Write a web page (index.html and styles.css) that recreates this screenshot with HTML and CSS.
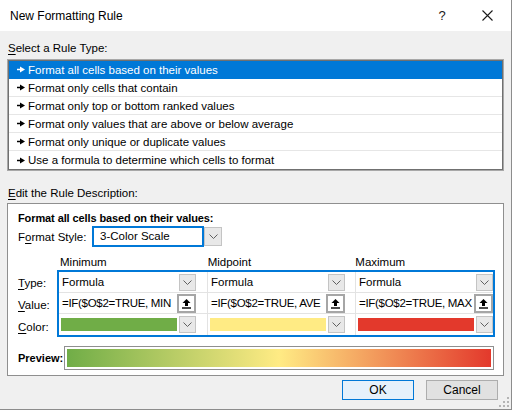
FILE: index.html
```html
<!DOCTYPE html>
<html>
<head>
<meta charset="utf-8">
<title>New Formatting Rule</title>
<link rel="stylesheet" href="styles.css">
</head>
<body>
<div class="dialog">
  <div class="titlebar">
    <span class="title">New Formatting Rule</span>
    <span class="help">?</span>
    <span class="close"><svg width="11" height="11" viewBox="0 0 11 11"><path d="M0.5 0.5L10.5 10.5M10.5 0.5L0.5 10.5" stroke="#1a1a1a" stroke-width="1.1" fill="none"/></svg></span>
  </div>
  <div class="content">
    <div class="section-label"><u>S</u>elect a Rule Type:</div>
    <ul class="rule-list">
      <li class="rule selected"><svg class="arrow" width="8" height="7" viewBox="0 0 8 7"><path d="M0 3.5H4" stroke="currentColor" stroke-width="1.5"/><path d="M3 0.5L8 3.5L3 6.5Z" fill="currentColor"/></svg>Format all cells based on their values</li>
      <li class="rule"><svg class="arrow" width="8" height="7" viewBox="0 0 8 7"><path d="M0 3.5H4" stroke="currentColor" stroke-width="1.5"/><path d="M3 0.5L8 3.5L3 6.5Z" fill="currentColor"/></svg>Format only cells that contain</li>
      <li class="rule"><svg class="arrow" width="8" height="7" viewBox="0 0 8 7"><path d="M0 3.5H4" stroke="currentColor" stroke-width="1.5"/><path d="M3 0.5L8 3.5L3 6.5Z" fill="currentColor"/></svg>Format only top or bottom ranked values</li>
      <li class="rule"><svg class="arrow" width="8" height="7" viewBox="0 0 8 7"><path d="M0 3.5H4" stroke="currentColor" stroke-width="1.5"/><path d="M3 0.5L8 3.5L3 6.5Z" fill="currentColor"/></svg>Format only values that are above or below average</li>
      <li class="rule"><svg class="arrow" width="8" height="7" viewBox="0 0 8 7"><path d="M0 3.5H4" stroke="currentColor" stroke-width="1.5"/><path d="M3 0.5L8 3.5L3 6.5Z" fill="currentColor"/></svg>Format only unique or duplicate values</li>
      <li class="rule last"><svg class="arrow" width="8" height="7" viewBox="0 0 8 7"><path d="M0 3.5H4" stroke="currentColor" stroke-width="1.5"/><path d="M3 0.5L8 3.5L3 6.5Z" fill="currentColor"/></svg>Use a formula to determine which cells to format</li>
    </ul>
    <div class="section-label edit-label"><u>E</u>dit the Rule Description:</div>
    <div class="desc-box">
      <div class="desc-title">Format all cells based on their values:</div>
      <div class="style-row">
        <span class="style-label">F<u>o</u>rmat Style:</span>
        <div class="combo">
          <div class="combo-text">3-Color Scale</div>
          <div class="dd-btn big"><svg width="9" height="5" viewBox="0 0 9 5"><path d="M0.5 0.5L4.5 4.5L8.5 0.5" stroke="#606060" fill="none"/></svg></div>
        </div>
      </div>
      <div class="scale-head">
        <span class="col-head">Minimum</span>
        <span class="col-head">Midpoint</span>
        <span class="col-head">Maximum</span>
      </div>
      <div class="scale-body">
        <div class="row-labels">
          <div class="row-label"><u>T</u>ype:</div>
          <div class="row-label"><u>V</u>alue:</div>
          <div class="row-label"><u>C</u>olor:</div>
        </div>
        <div class="scale-grid">
          <div class="cell"><div class="widget"><span class="cell-text">Formula</span><div class="dd-btn"><svg width="9" height="5" viewBox="0 0 9 5"><path d="M0.5 0.5L4.5 4.5L8.5 0.5" stroke="#606060" fill="none"/></svg></div></div></div>
          <div class="cell"><div class="widget"><span class="cell-text">Formula</span><div class="dd-btn"><svg width="9" height="5" viewBox="0 0 9 5"><path d="M0.5 0.5L4.5 4.5L8.5 0.5" stroke="#606060" fill="none"/></svg></div></div></div>
          <div class="cell"><div class="widget"><span class="cell-text">Formula</span><div class="dd-btn"><svg width="9" height="5" viewBox="0 0 9 5"><path d="M0.5 0.5L4.5 4.5L8.5 0.5" stroke="#606060" fill="none"/></svg></div></div></div>

          <div class="cell"><div class="widget"><span class="cell-text value-text">=IF($O$2=TRUE, MIN</span><div class="ref-btn"><svg width="11" height="11" viewBox="0 0 11 11"><path d="M5.5 1L1.5 5H4V8H7V5H9.5Z" fill="#000"/><path d="M1 10H10" stroke="#000" stroke-width="1.4"/></svg></div></div></div>
          <div class="cell"><div class="widget"><span class="cell-text value-text">=IF($O$2=TRUE, AVE</span><div class="ref-btn"><svg width="11" height="11" viewBox="0 0 11 11"><path d="M5.5 1L1.5 5H4V8H7V5H9.5Z" fill="#000"/><path d="M1 10H10" stroke="#000" stroke-width="1.4"/></svg></div></div></div>
          <div class="cell"><div class="widget"><span class="cell-text value-text">=IF($O$2=TRUE, MAX</span><div class="ref-btn"><svg width="11" height="11" viewBox="0 0 11 11"><path d="M5.5 1L1.5 5H4V8H7V5H9.5Z" fill="#000"/><path d="M1 10H10" stroke="#000" stroke-width="1.4"/></svg></div></div></div>

          <div class="cell last-row"><div class="widget"><span class="swatch green"></span><div class="dd-btn"><svg width="9" height="5" viewBox="0 0 9 5"><path d="M0.5 0.5L4.5 4.5L8.5 0.5" stroke="#606060" fill="none"/></svg></div></div></div>
          <div class="cell last-row"><div class="widget"><span class="swatch yellow"></span><div class="dd-btn"><svg width="9" height="5" viewBox="0 0 9 5"><path d="M0.5 0.5L4.5 4.5L8.5 0.5" stroke="#606060" fill="none"/></svg></div></div></div>
          <div class="cell last-row"><div class="widget"><span class="swatch red"></span><div class="dd-btn"><svg width="9" height="5" viewBox="0 0 9 5"><path d="M0.5 0.5L4.5 4.5L8.5 0.5" stroke="#606060" fill="none"/></svg></div></div></div>
        </div>
      </div>
      <div class="preview-row">
        <span class="preview-label">Preview:</span>
        <div class="preview-box"><div class="preview-bar"></div></div>
      </div>
    </div>
    <div class="buttons">
      <button class="btn ok">OK</button>
      <button class="btn cancel">Cancel</button>
    </div>
  </div>
  <div class="grip"><svg width="10" height="10" viewBox="0 0 10 10"><g fill="#b4b4b4"><rect x="8" y="0" width="2" height="2"/><rect x="4" y="4" width="2" height="2"/><rect x="8" y="4" width="2" height="2"/><rect x="0" y="8" width="2" height="2"/><rect x="4" y="8" width="2" height="2"/><rect x="8" y="8" width="2" height="2"/></g></svg></div>
</div>
</body>
</html>
```

FILE: styles.css
```css
* { box-sizing: border-box; }
html, body { margin: 0; padding: 0; }
body {
  width: 512px;
  height: 410px;
  overflow: hidden;
  font-family: "Liberation Sans", Arial, sans-serif;
  font-size: 11.5px;
  color: #000;
  background: #f0f0f0;
}
.dialog {
  position: relative;
  width: 512px;
  height: 410px;
  background: #f0f0f0;
  border-right: 1px solid #8c8c8c;
  border-bottom: 1px solid #8c8c8c;
}
.titlebar {
  height: 31px;
  background: #fff;
  display: flex;
  align-items: center;
  padding-left: 10px;
}
.title { flex: 1; font-size: 12px; }
.help { width: 14px; text-align: center; margin-right: 33px; font-size: 13px; color: #1a1a1a; }
.close { width: 11px; height: 11px; margin-right: 18px; display: flex; }
.content { padding: 0 0 0 7px; }
.section-label {
  height: 16px;
  line-height: 16px;
  margin-top: 9px;
  margin-bottom: 3px;
  padding-left: 1px;
}
.section-label u, .row-label u, .style-label u { text-underline-offset: 2px; }
.rule-list {
  list-style: none;
  margin: 0;
  padding: 1px;
  width: 497px;
  height: 112px;
  background: #fff;
  border: 1px solid #a8a8a8;
  box-shadow: inset 0 0 0 1px #707070;
}
.rule {
  height: 18px;
  display: flex;
  align-items: center;
  padding-left: 8px;
  border-bottom: 1px solid #e6e6e6;
}
.rule.last { border-bottom: none; }
.rule.selected { background: #0078d7; color: #fff; border-bottom-color: #0078d7; }
.arrow { margin-right: 3px; flex: none; }
.edit-label { margin-top: 14px; margin-bottom: 2px; }
.desc-box {
  width: 497px;
  height: 173px;
  background: #fff;
  border: 1px solid #8f8f8f;
  padding: 6px 0 0 10px;
}
.desc-title { font-weight: bold; font-size: 11px; letter-spacing: -0.1px; height: 16px; line-height: 16px; }
.style-row { display: flex; align-items: center; height: 21px; }
.style-label { width: 74px; }
.combo { display: flex; align-items: center; }
.combo-text {
  width: 112px;
  height: 21px;
  border: 2px solid #0078d7;
  padding-left: 6px;
  line-height: 17px;
}
.dd-btn {
  width: 17px;
  height: 17px;
  background: #e8e8e8;
  border: 1px solid #c4c4c4;
  display: flex;
  align-items: center;
  justify-content: center;
  flex: none;
}
.dd-btn.big { width: 18px; height: 19px; }
.scale-head {
  display: flex;
  margin-top: 7px;
  height: 16px;
  line-height: 16px;
  padding-left: 42px;
}
.col-head { width: 149px; }
.scale-body { display: flex; }
.row-labels { width: 39px; padding-top: 3px; }
.row-label { height: 22px; line-height: 20px; }
.scale-grid {
  width: 438px;
  height: 67px;
  border: 2px solid #0078d7;
  display: grid;
  grid-template-columns: 148px 148px 138px;
  grid-template-rows: 21px 21px 21px;
}
.cell {
  display: flex;
  align-items: center;
  padding-left: 1px;
  border-bottom: 1px solid #e3e3e3;
}
.cell:nth-child(3n+2), .cell:nth-child(3n) { border-left: 1px solid #e3e3e3; }
.cell.last-row { border-bottom: none; }
.widget {
  width: 136px;
  height: 19px;
  display: flex;
  align-items: center;
}
.cell-text { flex: 1; padding-left: 2px; white-space: nowrap; overflow: hidden; }
.value-text { letter-spacing: -0.3px; }
.ref-btn {
  width: 19px;
  height: 19px;
  border: 2px solid #a6a6a6;
  background: #fff;
  display: flex;
  align-items: center;
  justify-content: center;
  flex: none;
}
.swatch { flex: 1; height: 13px; margin-left: 1px; margin-right: 2px; }
.green { background: #70ad47; }
.yellow { background: #ffeb84; }
.red { background: #e3392c; }
.preview-row { display: flex; align-items: center; margin-top: 7px; }
.preview-label { font-weight: bold; font-size: 11px; width: 46px; }
.preview-box {
  width: 430px;
  height: 24px;
  border: 1px solid #8f8f8f;
  padding: 2px;
}
.preview-bar {
  height: 100%;
  background: linear-gradient(to right, #70ad47 0%, #ffeb84 50%, #e3392c 100%);
}
.buttons {
  display: flex;
  justify-content: flex-end;
  gap: 12px;
  margin-top: 4px;
  padding-right: 13px;
}
.btn {
  width: 72px;
  height: 20px;
  font-family: inherit;
  font-size: 12px;
  color: #000;
  padding: 0;
}
.ok { background: #e5f1fb; border: 1px solid #0078d7; }
.cancel { background: #e1e1e1; border: 1px solid #adadad; }
.grip { position: absolute; right: 2px; bottom: 2px; width: 10px; height: 10px; }
.grip svg { display: block; }
```
